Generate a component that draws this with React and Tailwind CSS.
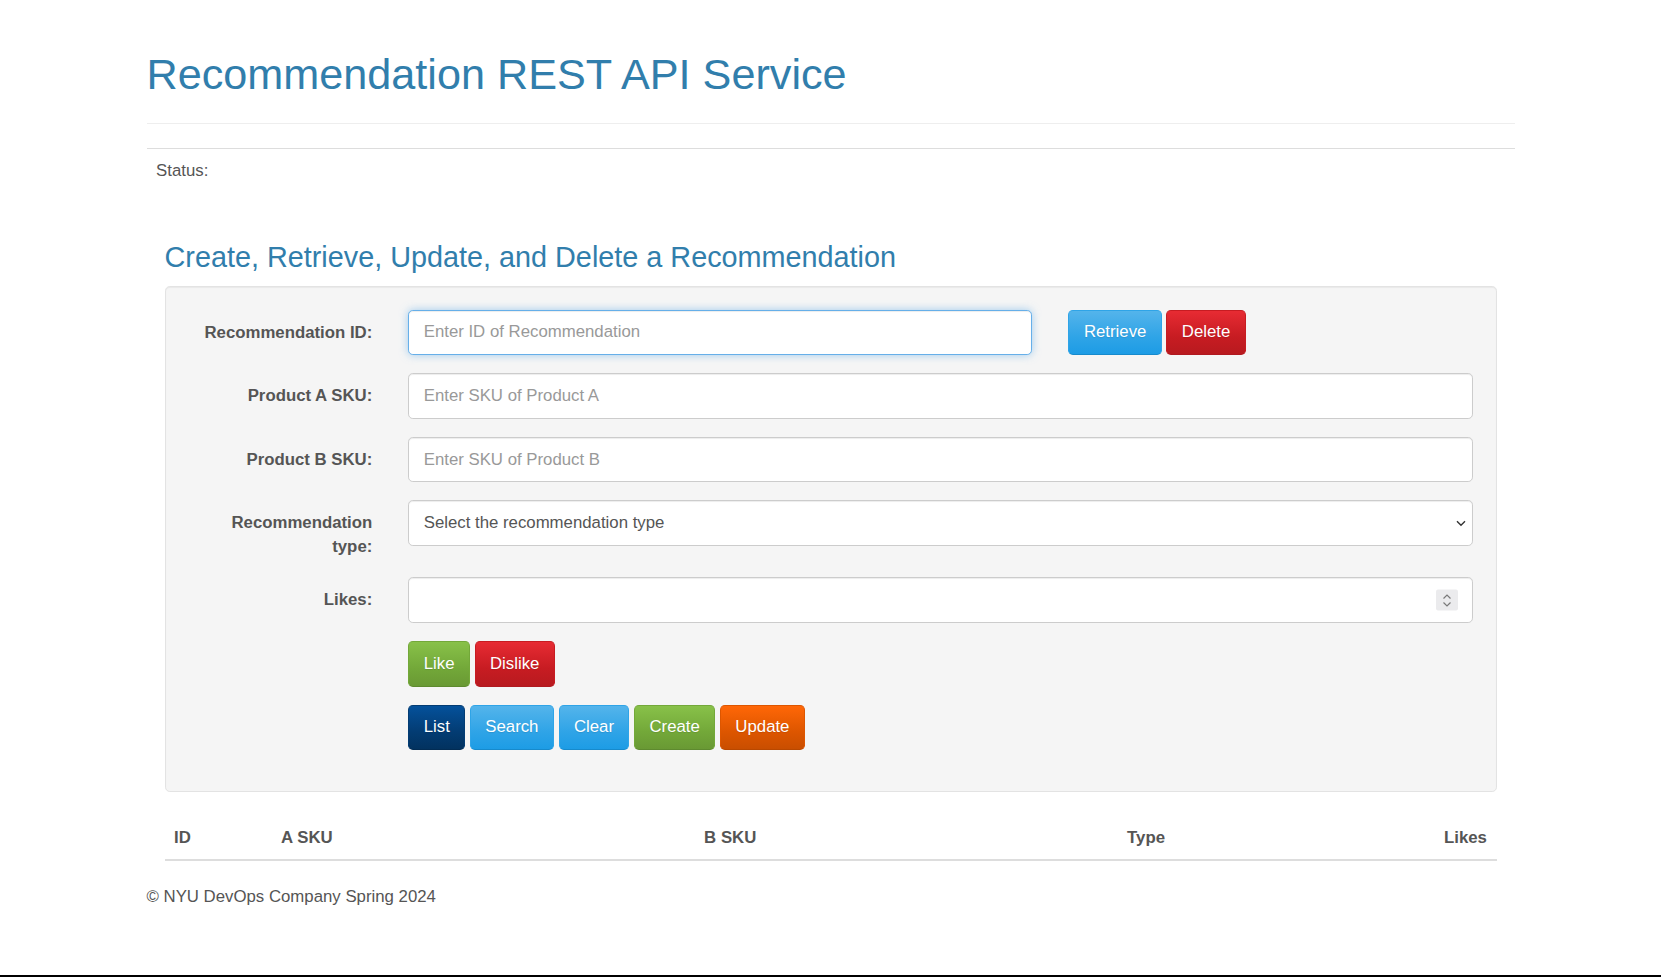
import React from 'react';

const font = "font-['Liberation_Sans','Helvetica_Neue',Arial,sans-serif]";

const btnBase =
  'h-[45.6px] px-[14.4px] rounded-[4.8px] border text-white text-[16.8px] leading-[24px] [text-shadow:0_1px_1px_rgba(0,0,0,0.1)] bg-no-repeat';

const btnStyles = {
  primary: 'border-[#2fa4e7] border-b-[#178acc] bg-[linear-gradient(#54b4eb,#2fa4e7_60%,#1d9ce5)]',
  danger: 'border-[#c71c22] border-b-[#b01920] bg-[linear-gradient(#e72b33,#c71c22_60%,#b81a1f)]',
  success: 'border-[#73a839] border-b-[#5e8a2f] bg-[linear-gradient(#88c149,#73a839_60%,#699934)]',
  warning: 'border-[#dd5600] border-b-[#b94800] bg-[linear-gradient(#ff6707,#dd5600_60%,#c94e00)]',
  info: 'border-[#033c73] border-b-[#022c54] bg-[linear-gradient(#04519b,#033c73_60%,#02325f)]',
};

const Btn = ({ kind, children }) => (
  <button type="button" className={`${btnBase} ${btnStyles[kind]}`}>
    {children}
  </button>
);

const inputBase =
  'h-[45.6px] w-full rounded-[4.8px] border bg-white px-[14.4px] text-[16.8px] text-[#555] outline-none placeholder:text-[#999]';

const Label = ({ children }) => (
  <label className="w-[184px] shrink-0 pt-[11px] text-right font-bold leading-[24px] text-[#555]">
    {children}
  </label>
);

export default function App() {
  return (
    <div className={`${font} min-h-[977px] flex flex-col bg-white text-[16.8px] leading-[24px] text-[#555]`}>
      <div className="flex-1">
        <div className="w-[1404px] mx-auto px-[18px]">
          {/* Page header */}
          <div className="mt-[51px] pb-[10.8px] mb-[24px] border-b border-[#eeeeee]">
            <h1 className="text-[43.2px] leading-[1.1] mb-[14px] text-[#317eac]">
              Recommendation REST API Service
            </h1>
          </div>

          {/* Flash message */}
          <div className="border-t border-[#dddddd] mb-[24px]">
            <div className="p-[9.6px]">Status:</div>
          </div>

          {/* Form */}
          <div className="px-[18px] flow-root">
            <h3 className="mt-[25.6px] mb-[12px] text-[28.8px] leading-[1.1] text-[#317eac]">
              Create, Retrieve, Update, and Delete a Recommendation
            </h3>
            <div className="rounded-[4.8px] border border-[#e3e3e3] bg-[#f5f5f5] p-[22.8px] shadow-[inset_0_1px_1px_rgba(0,0,0,0.05)]">
              <div className="flex flex-col gap-[18px] pb-[18px]">
                <div className="flex">
                  <Label>Recommendation ID:</Label>
                  <div className="ml-[36px] w-[624.2px]">
                    <input
                      className={`${inputBase} border-[#66afe9] shadow-[inset_0_1px_1px_rgba(0,0,0,0.075),0_0_8px_rgba(102,175,233,0.6)]`}
                      placeholder="Enter ID of Recommendation"
                    />
                  </div>
                  <div className="ml-[36px] flex gap-[4.7px]">
                    <Btn kind="primary">Retrieve</Btn>
                    <Btn kind="danger">Delete</Btn>
                  </div>
                </div>

                <div className="flex">
                  <Label>Product A SKU:</Label>
                  <div className="ml-[36px] flex-1">
                    <input
                      className={`${inputBase} border-[#cccccc] shadow-[inset_0_1px_1px_rgba(0,0,0,0.075)]`}
                      placeholder="Enter SKU of Product A"
                    />
                  </div>
                </div>

                <div className="flex">
                  <Label>Product B SKU:</Label>
                  <div className="ml-[36px] flex-1">
                    <input
                      className={`${inputBase} border-[#cccccc] shadow-[inset_0_1px_1px_rgba(0,0,0,0.075)]`}
                      placeholder="Enter SKU of Product B"
                    />
                  </div>
                </div>

                <div className="flex">
                  <Label>
                    Recommendation
                    <br />
                    type:
                  </Label>
                  <div className="ml-[36px] flex-1 relative self-start">
                    <select
                      className={`${inputBase} appearance-none border-[#cccccc] shadow-[inset_0_1px_1px_rgba(0,0,0,0.075)]`}
                      defaultValue=""
                    >
                      <option value="">Select the recommendation type</option>
                    </select>
                    <svg
                      className="absolute right-[6px] top-1/2 -translate-y-1/2 pointer-events-none"
                      width="12"
                      height="12"
                      viewBox="0 0 12 12"
                    >
                      <path d="M2 4.2l4 4 4-4" fill="none" stroke="#333" strokeWidth="1.4" />
                    </svg>
                  </div>
                </div>

                <div className="flex">
                  <Label>Likes:</Label>
                  <div className="ml-[36px] flex-1 relative">
                    <input
                      className={`${inputBase} border-[#cccccc] shadow-[inset_0_1px_1px_rgba(0,0,0,0.075)]`}
                    />
                    <div className="absolute right-[15px] top-1/2 -translate-y-1/2 w-[22px] h-[21px] bg-[#ebebed] rounded-[2px] flex flex-col items-center justify-center gap-[2px] pointer-events-none">
                      <svg width="10" height="6" viewBox="0 0 10 6">
                        <path d="M1.5 5l3.5-3.5L8.5 5" fill="none" stroke="#7a7a7a" strokeWidth="1.2" />
                      </svg>
                      <svg width="10" height="6" viewBox="0 0 10 6">
                        <path d="M1.5 1l3.5 3.5L8.5 1" fill="none" stroke="#7a7a7a" strokeWidth="1.2" />
                      </svg>
                    </div>
                  </div>
                </div>

                <div className="flex gap-[4.7px] ml-[220px]">
                  <Btn kind="success">Like</Btn>
                  <Btn kind="danger">Dislike</Btn>
                </div>

                <div className="flex gap-[4.7px] ml-[220px]">
                  <Btn kind="info">List</Btn>
                  <Btn kind="primary">Search</Btn>
                  <Btn kind="primary">Clear</Btn>
                  <Btn kind="success">Create</Btn>
                  <Btn kind="warning">Update</Btn>
                </div>
              </div>
            </div>
          </div>

          {/* Search results */}
          <div className="px-[18px] mt-[24px]">
            <div className="grid grid-cols-[107px_423px_423px_1fr_auto] border-b-2 border-[#dddddd] font-bold">
              <div className="p-[9.6px]">ID</div>
              <div className="p-[9.6px]">A SKU</div>
              <div className="p-[9.6px]">B SKU</div>
              <div className="p-[9.6px]">Type</div>
              <div className="p-[9.6px]">Likes</div>
            </div>
          </div>

          <footer className="mt-[24px]">
            <p>&copy; NYU DevOps Company Spring 2024</p>
          </footer>
        </div>
      </div>
      <div className="h-[2px] bg-black" />
    </div>
  );
}
